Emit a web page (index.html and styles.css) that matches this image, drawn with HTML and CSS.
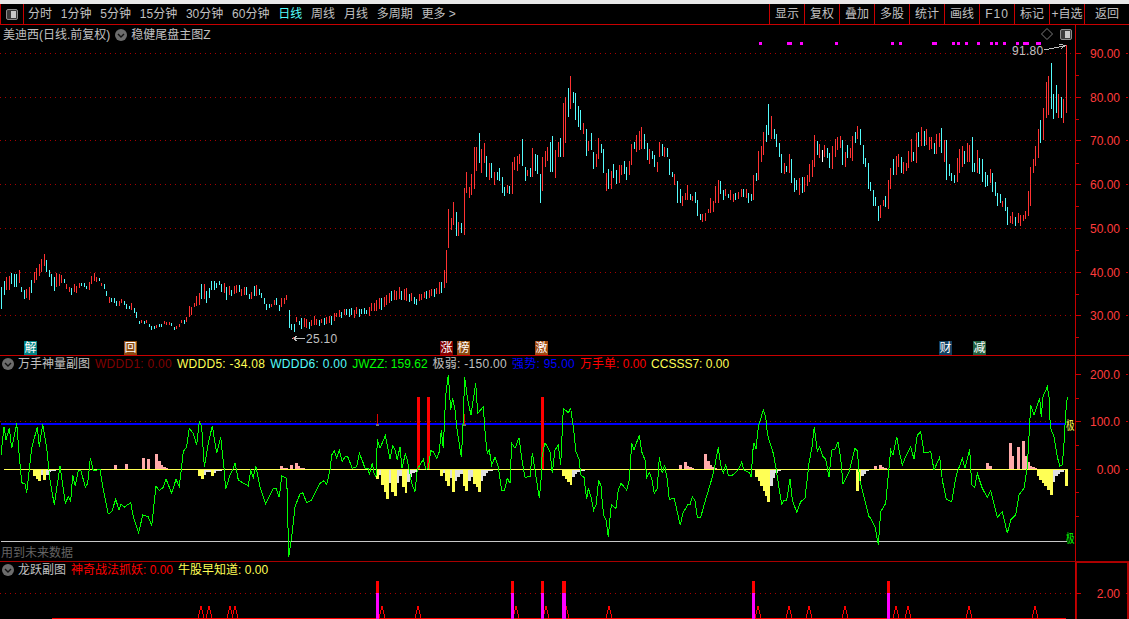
FILE: index.html
```html
<!DOCTYPE html>
<html lang="zh-CN">

<head>
    <meta charset="UTF-8" />
    <title>美迪西 日线</title>
    <link rel="stylesheet" href="styles.css">
</head>

<body>

    <div class="topband"></div>

    <!-- 工具栏 -->
    <div class="toolbar">
        <div class="tool-left">
            <div class="toggle"><span></span></div>
        </div>
        <div class="periods">
            <span>分时</span>
            <span>1分钟</span>
            <span>5分钟</span>
            <span>15分钟</span>
            <span>30分钟</span>
            <span>60分钟</span>
            <span class="active">日线</span>
            <span>周线</span>
            <span>月线</span>
            <span>多周期</span>
            <span>更多 &gt;</span>
        </div>
        <div class="actions">
            <span>显示</span>
            <span>复权</span>
            <span>叠加</span>
            <span>多股</span>
            <span>统计</span>
            <span>画线</span>
            <span class="f10">F10</span>
            <span>标记</span>
            <span>+自选</span>
            <span class="back">返回</span>
        </div>
    </div>

    <!-- 主图 -->
    <div class="panel panel-main">
        <div class="plot">
            <svg id="main-chart" class="chart" width="1075" height="330" viewBox="0 25 1075 330"></svg>
            <div class="legend">
                <span class="name">美迪西(日线.前复权)</span>
                <svg class="chev" width="12" height="12" viewBox="0 0 12 12"><circle cx="6" cy="6" r="6" fill="#6c6c6c"/><path d="M3 5l3 3 3-3" fill="none" stroke="#111" stroke-width="1.4"/></svg>
                <span class="name">稳健尾盘主图Z</span>
            </div>
            <div class="corner-icons">
                <svg width="12" height="12" viewBox="0 0 12 12"><path d="M6 .5L11.5 6 6 11.5 .5 6z" fill="none" stroke="#7a7a7a"/></svg>
                <div class="toggle"><span></span></div>
            </div>
            <span class="price-note high">91.80</span>
            <span class="price-note low">25.10</span>
            <span class="tag tag-teal t1">解</span>
            <span class="tag tag-brown t2">回</span>
            <span class="tag tag-maroon t3">涨</span>
            <span class="tag tag-brown t4">榜</span>
            <span class="tag tag-orange t5">激</span>
            <span class="tag tag-navy t6">财</span>
            <span class="tag tag-green t7">减</span>
        </div>
        <div class="axis"><svg id="main-axis" width="53" height="330" viewBox="1076 25 53 330"></svg></div>
    </div>

    <!-- 副图一 -->
    <div class="panel panel-sub1">
        <div class="plot">
            <svg id="sub1-chart" class="chart" width="1075" height="205" viewBox="0 356 1075 205"></svg>
            <div class="legend legend-sub">
                <svg class="chev" width="12" height="12" viewBox="0 0 12 12"><circle cx="6" cy="6" r="6" fill="#6c6c6c"/><path d="M3 5l3 3 3-3" fill="none" stroke="#111" stroke-width="1.4"/></svg>
                <span class="name">万手神量副图</span>
                <span class="c-maroon wide">WDDD1: 0.00</span>
                <span class="c-yellow wide">WDDD5: -34.08</span>
                <span class="c-cyan wide">WDDD6: 0.00</span>
                <span class="c-green">JWZZ: 159.62</span>
                <span class="name wide">极弱: -150.00</span>
                <span class="c-blue wide">强势: 95.00</span>
                <span class="c-red">万手单: 0.00</span>
                <span class="c-yellow">CCSSS7: 0.00</span>
            </div>
            <span class="edge-mark c-yellow m1">极</span>
            <span class="edge-mark c-green m2">极</span>
            <span class="future-note">用到未来数据</span>
        </div>
        <div class="axis"><svg id="sub1-axis" width="53" height="205" viewBox="1076 356 53 205"></svg></div>
    </div>

    <!-- 副图二 -->
    <div class="panel panel-sub2">
        <div class="plot">
            <svg id="sub2-chart" class="chart" width="1075" height="57" viewBox="0 562 1075 57"></svg>
            <div class="legend legend-sub">
                <svg class="chev" width="12" height="12" viewBox="0 0 12 12"><circle cx="6" cy="6" r="6" fill="#6c6c6c"/><path d="M3 5l3 3 3-3" fill="none" stroke="#111" stroke-width="1.4"/></svg>
                <span class="name">龙跃副图</span>
                <span class="c-red">神奇战法抓妖: 0.00</span>
                <span class="c-yellow">牛股早知道: 0.00</span>
            </div>
        </div>
        <div class="axis axis-active"><svg id="sub2-axis" width="53" height="57" viewBox="1076 562 53 57"></svg></div>
    </div>

    <script>
        const NS = "http://www.w3.org/2000/svg";
        const RED = "#ff3232";
        const CYAN = "#54fcfc";
        const barColors = { r: RED, c: CYAN, w: "#ffffff" };

        function add(svg, tag, attrs, text) {
            const el = document.createElementNS(NS, tag);
            for (const k in attrs) el.setAttribute(k, attrs[k]);
            if (text) el.textContent = text;
            svg.appendChild(el);
            return el;
        }

        function rect(svg, x, y, w, h, fill) {
            add(svg, "rect", { x, y, width: w, height: h, fill, "shape-rendering": "crispEdges" });
        }

        function dotted(svg, y, x2) {
            add(svg, "line", { x1: 0, y1: y + 0.5, x2, y2: y + 0.5, stroke: "#a80000", "stroke-dasharray": "1 4", "shape-rendering": "crispEdges" });
        }

        // 读取的坐标都是放大三倍的裁剪坐标, ox/oy 是裁剪的左上角
        function parsePts(ox, oy, str) {
            return str.trim().split(/\s+/).map(p => {
                const [x, y] = p.split(",").map(Number);
                return [ox + x / 3, oy + y / 3];
            });
        }

        let seed = 7;
        function rnd() {
            seed = (seed * 1103515245 + 12345) & 0x7fffffff;
            return seed / 0x7fffffff;
        }

        /* ---------- 主图 ---------- */
        const mainChart = document.getElementById("main-chart");
        const priceLines = [53, 97, 140, 184, 228, 272, 315];
        priceLines.forEach(y => dotted(mainChart, y, 1075));

        const leftKeys = "4,165,235 13,145,195 28,130,175 43,130,175 58,125,170 64,168,192 73,185,215 88,160,205 103,120,160 118,95,140 133,67,115 148,118,145 157,140,185 172,128,180 187,135,160 202,175,192 217,160,195 232,155,182 247,155,175 262,170,183 271,138,175 277,115,155 286,135,157 301,148,160 310,157,180 325,190,216 340,208,224 355,205,225 370,210,232 385,222,235 400,228,255 415,262,282 430,272,285 445,275,290 460,285,302 470,275,295 485,270,285 500,272,288 515,285,295 530,280,290 545,275,288 555,258,285 565,225,262 580,215,235 598,180,225 607,153,212 622,185,215 637,140,185 652,160,178 667,147,180 676,158,205 691,178,200 706,163,195 721,163,192 736,175,205 751,185,210 767,155,195 775,180,200 790,195,215 797,210,233 810,218,232 826,195,222 836,220,240 845,192,232 859,195,215 865,232,300 874,277,300 880,282,320 890,262,277 896,262,280 "
            + "900,264,300 930,264,294 960,264,288 990,252,282 1020,240,264 1050,234,264 1095,234,258 1134,204,246 1155,198,234 1185,174,210 1215,174,216 1245,204,228 1275,180,210 1311,168,198 1329,135,186 1340,45,150";
        const keys = leftKeys.split(" ").map(p => p.split(",").map(Number)).map(k => [k[0] / 3, 230 + k[1] / 3, 230 + k[2] / 3]);

        function interp(x) {
            for (let i = 1; i < keys.length; i++) {
                if (x <= keys[i][0]) {
                    const a = keys[i - 1], b = keys[i];
                    const t = (x - a[0]) / (b[0] - a[0]);
                    return [a[1] + (b[1] - a[1]) * t, a[2] + (b[2] - a[2]) * t];
                }
            }
            return [keys[keys.length - 1][1], keys[keys.length - 1][2]];
        }

        let prevMid = 330;
        for (let i = 0; i < 178; i++) {
            const x = Math.floor(1.5 + 2.5 * i);
            const [top, bot] = interp(x);
            const jitter = (rnd() - 0.5) * 4;
            const t = top + rnd() * 2.5 + jitter;
            const b = Math.max(bot - rnd() * 2.5 + jitter, t + 3);
            const mid = (t + b) / 2;
            const up = mid < prevMid;
            const fill = (rnd() < 0.8 ? up : !up) ? RED : CYAN;
            rect(mainChart, x, Math.round(t), 1, Math.round(b - t), fill);
            prevMid = mid;
        }

        const midBars = "20,540,640,r 25,418,535,r 34,445,480,r 40,395,465,r 49,425,497,c 55,457,497,r 64,460,488,c 73,355,495,r 79,307,370,r 88,350,385,r 94,312,375,r 103,232,358,r 109,232,302,r 118,190,280,c 124,238,310,r 133,220,280,r 139,258,322,c 148,278,330,r 154,280,325,c 163,305,345,r 172,305,330,c 178,295,332,c 187,320,368,c 193,352,378,c 202,345,370,r 208,348,372,c 217,275,372,r 223,260,300,r 232,258,302,r 238,252,282,r 247,208,288,c 256,292,332,c 262,300,318,r 271,295,322,c 277,235,322,r 286,252,302,c 292,255,312,c 301,312,398,c 307,262,362,r 316,243,290,r 322,232,272,r 331,215,305,c 337,198,305,c 346,240,323,r 355,215,262,r 361,205,262,c 370,98,262,r 376,82,218,r 385,55,140,c 391,18,118,r 400,67,98,c 406,70,150,c 415,108,170,c 421,120,180,c 430,160,193,r 439,178,258,c 445,212,243,r 454,190,240,c 460,245,296,c 469,252,290,r 475,205,268,r 484,222,248,c 490,238,308,c 499,310,362,r 505,298,358,c 514,302,358,r 520,283,325,c 529,300,342,c 538,285,340,r 544,285,315,r 553,273,312,c 559,292,330,c 568,273,315,r 574,222,285,r 583,215,238,c 589,195,245,r 598,183,240,r 604,172,238,r 613,192,238,c 622,220,270,c 628,238,282,r 637,242,268,c 643,255,290,c 652,277,305,r 658,215,262,r 667,222,258,c 673,232,262,r 682,235,262,c 688,268,315,c 697,305,320,c 703,312,346,r 712,333,398,c 721,358,398,c 727,378,408,r 736,370,390,r 742,345,390,r 751,372,390,c 757,378,392,r 766,366,398,c 772,390,438,c 781,432,450,c 787,432,455,r 796,428,452,r 805,418,430,r 811,385,428,r 820,392,425,r 826,348,398,r 835,330,398,r 841,333,372,c 850,360,390,c 856,358,378,r 865,372,384,c";
        const rightBars = "1,390,420,r 10,402,425,r 16,398,420,c 25,395,418,r 34,387,412,r 40,388,412,c 49,388,413,r 55,398,430,c 64,402,422,c 70,345,420,r 79,340,362,c 85,273,360,r 94,258,305,r 100,215,285,r 109,195,245,c 115,132,225,c 124,168,238,r 133,208,238,c 139,222,260,c 148,250,290,c 154,282,340,c 163,310,342,r 169,318,335,c 178,282,340,r 184,297,370,c 193,355,395,c 199,360,390,c 208,354,404,r 217,352,398,c 223,350,395,r 232,345,378,r 238,312,365,r 247,300,350,r 253,225,322,r 262,243,285,c 268,252,295,r 277,270,305,w 283,255,290,r 292,265,295,c 298,278,323,c 307,258,327,r 316,238,290,r 322,232,270,r 331,228,265,r 337,240,315,c 346,276,322,r 352,255,295,c 361,265,295,r 367,228,302,r 376,215,250,c 382,198,238,r 391,208,255,c 400,255,312,c 406,295,322,c 415,310,386,c 421,365,392,c 430,390,437,c 436,410,437,c 445,438,482,c 451,435,473,r 460,420,438,r 466,408,442,c 475,360,447,r 481,325,386,r 490,297,345,c 499,288,345,r 505,282,320,r 514,292,340,c 520,305,342,r 529,308,332,r 535,273,323,r 544,237,305,r 550,277,303,c 559,220,308,r 565,215,260,c 574,200,258,r 583,212,258,c 589,207,255,r 598,230,270,r 604,232,268,r 613,250,282,c 619,222,282,r 628,218,260,r 634,205,280,c 643,240,307,r 649,240,360,c 658,312,348,c 664,340,362,c 673,345,368,c 682,293,367,r 688,268,340,r 697,258,322,r 703,272,312,c 712,250,305,r 718,255,305,r 727,232,335,c 733,308,335,c 742,270,338,r 748,295,342,c 757,298,365,c 766,335,380,c 772,345,378,c 781,328,370,r 787,338,395,c 796,365,408,c 802,400,438,c 811,402,430,c 817,422,442,r 826,415,452,c 832,440,495,c 841,468,488,r 847,457,493,r 856,470,498,c 865,460,490,r 871,465,498,r 880,465,482,r 886,453,478,r 895,393,468,r 901,320,438,r 910,297,340,r 916,258,318,r 925,207,293,r 931,180,248,c 940,145,240,r 949,67,173,r 955,48,165,r 964,10,148,c 970,102,177,c 979,75,158,c 985,102,174,r 994,110,174,c 1000,118,188,r 1009,-45,158,r";

        function drawBars(ox, oy, str) {
            str.split(" ").forEach(item => {
                const p = item.split(",");
                const x = Math.floor(ox + Number(p[0]) / 3);
                const top = Math.round(oy + Number(p[1]) / 3);
                const bot = Math.round(oy + Number(p[2]) / 3);
                rect(mainChart, x, top, 1, bot - top, barColors[p[3]]);
            });
        }
        drawBars(440, 70, midBars);
        drawBars(730, 60, rightBars);

        // 顶部品红信号点
        [[759, 3], [787, 5], [800, 3], [835, 3], [891, 3], [899, 3], [932, 5], [952, 3], [957, 3], [965, 3], [977, 3], [990, 3], [995, 3], [1003, 3], [1016, 3], [1023, 6], [1036, 5]]
            .forEach(d => rect(mainChart, d[0], 42, d[1], 3, "#ff00ff"));

        // 最高最低价引线
        add(mainChart, "path", { d: "M1044 50L1054 48L1064 46M1059 44L1065 45.5L1061 49", fill: "none", stroke: "#c0c0c0", "shape-rendering": "crispEdges" });
        add(mainChart, "path", { d: "M293 338.5H305M297 336L293 338.5L297 341", fill: "none", stroke: "#c0c0c0", "shape-rendering": "crispEdges" });
        rect(mainChart, 293, 337, 1, 2, "#c04040");

        /* ---------- 副图一 ---------- */
        const sub1 = document.getElementById("sub1-chart");
        dotted(sub1, 421, 1075);

        const YEL = "#ffff55";
        const GRY = "#e0e0e0";
        const PNK = "#ffaaaa";
        const ZERO = 469;

        function hist(ox, oy, groups) {
            groups.forEach(g => {
                const x = Math.round(ox + g[0] / 3);
                const w = Math.max(Math.round((g[1] - g[0]) / 3), 1);
                const y = Math.round(oy + g[2] / 3);
                if (y >= ZERO) rect(sub1, x, ZERO, w, y - ZERO, g[3]);
                else rect(sub1, x, y, w, ZERO - y, g[3]);
            });
        }

        hist(0, 400, [
            [99, 108, 228, YEL], [108, 114, 237, YEL], [114, 123, 243, YEL], [123, 129, 225, GRY], [129, 138, 240, YEL], [138, 147, 225, GRY], [147, 153, 217, GRY], [153, 168, 212, GRY],
            [594, 603, 228, YEL], [603, 611, 237, YEL], [611, 618, 225, GRY], [618, 633, 215, GRY], [633, 642, 228, YEL], [642, 648, 218, GRY], [648, 666, 212, GRY],
            [342, 351, 195, PNK], [375, 384, 192, PNK], [426, 435, 174, PNK], [441, 450, 177, PNK], [465, 474, 162, PNK], [474, 483, 183, PNK], [483, 489, 195, PNK], [489, 498, 201, PNK], [498, 504, 204, PNK],
            [840, 849, 198, PNK], [849, 864, 204, PNK], [870, 879, 195, PNK], [885, 894, 189, PNK], [894, 900, 198, PNK]
        ]);
        hist(300, 370, [
            [0, 15, 294, PNK],
            [228, 237, 327, YEL], [237, 243, 315, GRY], [243, 252, 345, YEL], [252, 258, 366, YEL], [258, 267, 387, YEL], [267, 273, 340, GRY], [273, 282, 366, YEL], [282, 291, 378, YEL], [291, 297, 340, GRY], [297, 306, 318, GRY], [306, 315, 350, YEL], [315, 321, 369, YEL], [321, 330, 335, GRY], [330, 336, 320, GRY], [336, 345, 310, GRY], [345, 351, 305, GRY],
            [420, 429, 318, YEL], [429, 435, 310, GRY], [435, 441, 333, YEL], [441, 450, 348, YEL], [450, 456, 325, GRY], [456, 465, 366, YEL], [465, 471, 333, GRY], [471, 480, 320, GRY], [480, 489, 312, GRY], [489, 495, 348, YEL], [495, 504, 363, YEL], [504, 513, 333, GRY], [513, 519, 320, GRY], [519, 528, 342, YEL], [528, 534, 351, YEL], [534, 543, 366, YEL], [543, 549, 333, GRY], [549, 558, 318, GRY], [558, 564, 310, GRY], [564, 579, 303, GRY],
            [786, 795, 318, YEL], [795, 801, 327, YEL], [801, 810, 336, YEL], [810, 816, 345, YEL], [816, 825, 320, GRY], [825, 831, 312, GRY], [831, 840, 305, GRY], [840, 855, 302, GRY]
        ]);
        hist(590, 400, [
            [267, 276, 195, PNK], [282, 291, 186, PNK], [291, 297, 198, PNK], [297, 306, 201, PNK], [306, 312, 204, PNK],
            [342, 351, 162, PNK], [351, 360, 183, PNK], [360, 366, 195, PNK], [366, 375, 201, PNK], [375, 381, 204, PNK]
        ]);
        hist(729, 400, [
            [78, 87, 231, YEL], [87, 93, 243, YEL], [93, 102, 258, YEL], [102, 108, 273, YEL], [108, 114, 288, YEL], [114, 123, 306, YEL], [123, 132, 258, GRY], [132, 138, 234, GRY], [138, 147, 218, GRY], [147, 156, 214, GRY], [156, 171, 211, GRY],
            [381, 390, 273, YEL], [390, 396, 243, YEL], [396, 405, 228, GRY], [405, 411, 222, GRY], [411, 420, 214, GRY], [420, 429, 210, GRY],
            [435, 444, 198, PNK], [450, 459, 195, PNK], [459, 465, 201, PNK], [465, 474, 204, PNK],
            [771, 780, 189, PNK], [780, 789, 198, PNK], [840, 849, 129, PNK], [849, 855, 168, PNK], [864, 873, 141, PNK], [879, 888, 123, PNK], [888, 894, 168, PNK], [894, 903, 186, PNK], [903, 909, 198, PNK], [909, 918, 201, PNK], [918, 924, 204, PNK],
            [924, 930, 228, YEL], [930, 939, 240, YEL], [939, 945, 249, YEL], [945, 954, 258, YEL], [954, 963, 270, YEL], [963, 972, 285, YEL], [972, 978, 246, GRY], [978, 987, 228, GRY], [987, 993, 222, GRY], [993, 1005, 216, GRY], [1008, 1017, 258, YEL]
        ]);

        rect(sub1, 4, 469, 1064, 1, "#ffff55");
        rect(sub1, 1, 423, 1065, 2, "#0000ff");
        rect(sub1, 1, 541, 1066, 1, "#c8c8c8");

        [417, 427, 541].forEach(x => rect(sub1, x, 397, 3, 72, "#ff0000"));
        [377, 464].forEach(x => {
            rect(sub1, x, 414, 1, 10, "#e00000");
            rect(sub1, x - 1, 424, 3, 2, "#707070");
        });

        const green = [].concat(
            parsePts(0, 400, "3,165 12,80 18,120 28,85 35,145 50,70 58,170 65,248 75,252 80,278 95,145 112,80 118,140 128,72 140,145 150,240 163,315 180,198 196,310 205,290 212,305 218,225 226,258 235,212 243,212 256,262 263,250 271,175 280,212 300,208 310,270 325,342 335,335 347,298 357,330 363,312 372,322 392,308 400,350 416,398 428,345 445,350 455,378 468,258 478,272 490,262 498,237 515,280 528,238 538,260 550,155 560,140 568,85 580,100 590,135 598,65 605,80 613,200 625,130 637,78 650,160 662,112 672,205 677,268 690,225 698,210 705,188 715,240 745,258 752,212 760,232 767,198 780,260 797,312 820,265 828,265 838,292 845,228 860,235 862,295 866,470 875,410 885,320 900,282"),
            parsePts(300, 370, "8,368 20,398 35,390 60,340 72,332 80,343 90,300 95,255 103,243 110,265 118,240 127,275 135,260 143,260 157,295 170,290 178,250 188,275 195,295 205,295 208,315 217,278 222,310 228,320 232,208 240,235 256,197 270,268 278,228 285,240 292,270 300,230 306,295 316,252 322,270 335,340 345,365 352,298 370,268 378,298 385,295 392,242 400,245 410,265 418,245 424,180 430,235 437,75 445,15 452,120 458,85 465,120 472,185 484,260 488,190 494,22 503,90 513,135 527,40 533,130 550,110 556,195 562,250 568,240 575,285 585,262 595,290 605,362 613,362 622,325 630,340 635,220 645,235 657,203 665,265 675,322 690,320 697,248 705,300 718,385 724,320 726,260 735,218 750,245 757,310 765,240 775,225 782,285 790,115 805,128 812,115 820,170 828,245 838,270 842,315 852,322 860,388 865,355 873,380 881,420 888,405 896,330"),
            parsePts(590, 400, "33,258 38,322 42,348 48,360 55,410 62,330 65,315 78,325 85,270 93,250 110,270 118,240 125,130 132,150 148,105 155,155 165,180 170,232 178,218 185,235 193,280 202,265 208,172 217,220 224,195 232,240 238,298 253,295 265,350 271,376 278,340 295,312 301,312 307,290 315,302 322,352 332,352 345,305 362,248 372,210 385,142 392,195 400,220 407,195 415,225 428,225 445,210 455,187 462,210 478,218 484,232 488,155 492,128 498,148 505,80 520,30 527,50 532,100 540,130 550,160 558,205 565,250 575,312 582,300 590,300"),
            parsePts(729, 400, "183,238 190,300 203,337 215,305 228,295 240,190 250,135 256,80 265,155 272,140 282,170 290,178 300,232 308,150 318,148 327,125 335,175 342,252 360,215 378,145 385,152 392,240 405,290 420,350 425,355 438,380 448,435 455,335 470,310 478,225 485,150 492,165 503,110 510,150 520,195 530,170 545,140 555,178 565,105 575,95 585,158 605,155 615,210 632,172 640,240 652,298 668,305 682,225 700,175 708,205 722,148 728,255 737,262 745,220 760,265 775,292 785,272 805,352 820,335 835,400 845,360 860,345 870,285 885,265 895,200 902,70 905,15 915,45 932,-5 937,50 942,-10 955,-40 960,-10 963,60 965,85 975,110 985,170 992,198 1000,195 1005,130 1010,40 1015,-10")
        );
        add(sub1, "polyline", { points: green.map(p => p[0].toFixed(1) + "," + p[1].toFixed(1)).join(" "), fill: "none", stroke: "#00ff00", "stroke-width": 1, "shape-rendering": "crispEdges" });

        /* ---------- 副图二 ---------- */
        const sub2 = document.getElementById("sub2-chart");
        dotted(sub2, 593, 1075);
        [201, 209, 230, 235, 382, 418, 516, 546, 566, 609, 758, 789, 809, 845, 896, 908, 969, 1035].forEach(x => {
            add(sub2, "path", { d: `M${x - 3} 618L${x} 606L${x + 3} 618`, fill: "none", stroke: "#ff0000", "shape-rendering": "crispEdges" });
        });
        rect(sub2, 52, 618, 1014, 1, "#ff0000");
        [[376, 3], [511, 3], [541, 3], [562, 4], [752, 3], [887, 3]].forEach(b => {
            rect(sub2, b[0], 581, b[1], 12, "#ff0000");
            rect(sub2, b[0], 593, b[1], 26, "#ff00ff");
        });

        /* ---------- 坐标轴 ---------- */
        function drawAxis(id, labels, minors) {
            const svg = document.getElementById(id);
            labels.forEach(l => {
                rect(svg, 1076, l.y, 5, 1, "#c80000");
                rect(svg, 1126, l.y, 2, 1, "#c80000");
                add(svg, "text", { x: 1120, y: l.y + 5, class: "axis-label" }, l.text);
            });
            minors.forEach(y => rect(svg, 1076, y, 3, 1, "#c80000"));
        }

        drawAxis("main-axis", [
            { y: 53, text: "90.00" }, { y: 97, text: "80.00" }, { y: 140, text: "70.00" }, { y: 184, text: "60.00" },
            { y: 228, text: "50.00" }, { y: 272, text: "40.00" }, { y: 315, text: "30.00" }
        ], [75, 119, 163, 206, 250, 294, 337]);
        drawAxis("sub1-axis", [
            { y: 374, text: "200.0" }, { y: 421, text: "100.0" }, { y: 469, text: "0.00" }
        ], [398, 445, 492, 516]);
        drawAxis("sub2-axis", [{ y: 593, text: "2.00" }], []);
    </script>

</body>

</html>
```

FILE: styles.css
```css
* {
    box-sizing: border-box;
}

html,
body {
    height: 100%;
}

body {
    margin: 0;
    background-color: #000;
    color: #c0c0c0;
    font-family: "Liberation Sans", "Noto Sans CJK SC", sans-serif;
    font-size: 12px;
    line-height: 14px;
    overflow: hidden;
    display: flex;
    flex-direction: column;
}

.topband {
    height: 4px;
    background-color: #e8e8e8;
    flex: none;
}

/* Toolbar */
.toolbar {
    height: 21px;
    flex: none;
    display: flex;
    align-items: stretch;
    border-bottom: 1px solid #c80000;
}

.tool-left {
    width: 24px;
    border-left: 1px solid #c80000;
    border-right: 1px solid #c80000;
    display: flex;
    align-items: center;
    justify-content: center;
}

.toggle {
    width: 12px;
    height: 11px;
    border: 1px solid #8c8c8c;
    border-radius: 2px;
    background-color: #3a3a3a;
    display: flex;
    justify-content: flex-end;
    padding: 1px;
}

.toggle span {
    width: 5px;
    background-color: #c8c8c8;
}

.periods {
    flex: 1;
    display: flex;
    align-items: center;
    gap: 8.8px;
    padding-left: 4px;
    white-space: nowrap;
}

.periods .active {
    color: #54fcfc;
}

.actions {
    display: flex;
    align-items: stretch;
}

.actions span {
    width: 35px;
    border-left: 1px solid #c80000;
    display: flex;
    align-items: center;
    justify-content: center;
    white-space: nowrap;
}

.actions .back {
    width: 45px;
}

.actions .f10 {
    letter-spacing: 1px;
}

/* Panels */
.panel {
    display: flex;
    flex: none;
}

.panel-main {
    height: 331px;
    border-bottom: 1px solid #c80000;
}

.panel-sub1 {
    height: 206px;
    border-bottom: 1px solid #a80000;
}

.panel-sub2 {
    height: 57px;
}

.plot {
    width: 1075px;
    position: relative;
    overflow: hidden;
}

.chart {
    position: absolute;
    top: 0;
    left: 0;
    display: block;
}

.axis {
    width: 54px;
    border-left: 1px solid #c80000;
}

.axis svg {
    display: block;
}

.axis-active {
    box-shadow: inset 1px 1px 0 #b00000, inset -2px 0 0 #b00000, inset 0 1px 0 #b00000;
}

.axis-label {
    fill: #ff3c3c;
    font-size: 12px;
    text-anchor: end;
}

/* Legends */
.legend {
    position: absolute;
    top: 3px;
    left: 3px;
    display: flex;
    align-items: center;
    gap: 5px;
    white-space: nowrap;
}

.legend-sub {
    top: 1px;
    left: 2px;
}

.wide {
    letter-spacing: 0.27px;
}

.chev {
    flex: none;
    margin-right: -1px;
}

.c-maroon { color: #800000; }
.c-yellow { color: #ffff55; }
.c-cyan { color: #54fcfc; }
.c-green { color: #00ff00; }
.c-blue { color: #0000ff; }
.c-red { color: #ff0000; }

.corner-icons {
    position: absolute;
    top: 3px;
    right: 3px;
    display: flex;
    align-items: center;
    gap: 7px;
}

.price-note {
    position: absolute;
    letter-spacing: 0.3px;
}

.price-note.high {
    left: 1012px;
    top: 19px;
}

.price-note.low {
    left: 306px;
    top: 307px;
}

/* Signal tags */
.tag {
    position: absolute;
    top: 316px;
    width: 13px;
    height: 14px;
    line-height: 14px;
    color: #fff;
    font-size: 12px;
    text-align: center;
}

.tag-teal { background-color: #008080; }
.tag-brown { background-color: #8b4a10; }
.tag-maroon { background-color: #800000; }
.tag-orange { background-color: #a04a10; }
.tag-navy { background-color: #104060; }
.tag-green { background-color: #206040; }

.t1 { left: 24px; }
.t2 { left: 124px; }
.t3 { left: 440px; }
.t4 { left: 457px; }
.t5 { left: 535px; }
.t6 { left: 939px; }
.t7 { left: 973px; }

/* 只露出窄窄一条, 横向压缩后不会被坐标轴切掉 */
.edge-mark {
    position: absolute;
    left: 1066px;
    transform: scaleX(0.7);
    transform-origin: left center;
}

.m1 { top: 63px; }
.m2 { top: 176px; }

.future-note {
    position: absolute;
    left: 1px;
    top: 190px;
    color: #646464;
}
```
